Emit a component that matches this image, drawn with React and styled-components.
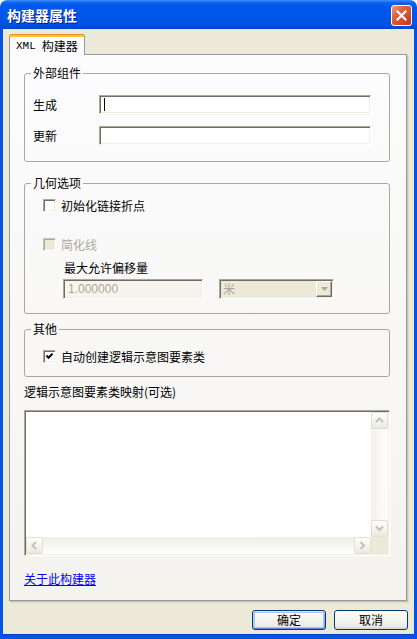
import React from 'react';
import styled, { createGlobalStyle } from 'styled-components';

const CJK = `"Noto Sans CJK SC", "Noto Sans", "Liberation Sans", sans-serif`;

const GlobalStyle = createGlobalStyle`
  html, body { margin: 0; padding: 0; background: #ffffff; }
  body { font-family: ${CJK}; font-size: 12px; }
  #root { width: 417px; height: 639px; overflow: hidden; }
  *, *::before, *::after { box-sizing: border-box; }
`;

const Window = styled.div`
  width: 417px;
  height: 639px;
  display: flex;
  flex-direction: column;
  font-family: ${CJK};
  font-size: 12px;
  color: #000;
`;

const TitleBar = styled.div`
  height: 29px;
  flex: none;
  display: flex;
  align-items: center;
  justify-content: space-between;
  padding: 0 5px 0 7px;
  border-radius: 7px 7px 0 0;
  background: linear-gradient(
    to bottom,
    #3d8ff8 0%,
    #0b61ec 10%,
    #0058ee 20%,
    #0055e9 55%,
    #0052e2 85%,
    #0045cc 100%
  );
`;

const Title = styled.span`
  color: #fff;
  font-weight: bold;
  font-size: 14px;
  line-height: 16px;
  text-shadow: 1px 1px 0 #0a1883;
  margin-top: 1px;
`;

const CloseButton = styled.div`
  width: 21px;
  height: 21px;
  margin-top: 2px;
  border: 1px solid #fff;
  border-radius: 3px;
  background: linear-gradient(135deg, #eb9a7e 0%, #e0603d 35%, #d24b27 70%, #b8361a 100%);
  display: flex;
  align-items: center;
  justify-content: center;
`;

const Client = styled.div`
  flex: 1;
  display: flex;
  flex-direction: column;
  background: #ece9d8;
  border-style: solid;
  border-color: #0055e5;
  border-width: 0 3px 4px 3px;
  padding: 5px 6px 5px 6px;
  box-shadow: inset 0 -1px 0 #0042c4;
`;

const TabStrip = styled.div`
  height: 20px;
  display: flex;
  align-items: flex-start;
  position: relative;
  z-index: 1;
`;

const Tab = styled.div`
  width: 76px;
  height: 21px;
  border: 1px solid #919b9c;
  border-top-color: #e68b2c;
  border-bottom: none;
  border-radius: 3px 3px 0 0;
  background: linear-gradient(to bottom, #ffc73c 0, #ffc73c 2px, #fcfcfe 2px, #fcfcfe 100%);
  padding: 2px 0 0 6px;
  display: flex;
  align-items: center;
  line-height: 14px;
  font-size: 12px;
  white-space: nowrap;
`;

const Mono = styled.span`
  font-family: "Liberation Mono", "DejaVu Sans Mono", monospace;
  font-size: 11px;
  margin-right: 6px;
`;

const Panel = styled.div`
  height: 547px;
  margin-right: 1px;
  border: 1px solid #919b9c;
  box-shadow: 1px 1px 0 #c8c5b5, 2px 2px 0 #dedbcb;
  background: linear-gradient(to bottom, #fcfcfe 0%, #f4f3ee 100%);
  display: flex;
  flex-direction: column;
  padding: 11px 16px 14px 14px;
`;

const Group = styled.fieldset`
  margin: ${(p) => p.$mt || 0}px 0 0 0;
  padding: 0;
  min-width: 0;
  border: 1px solid #a9a89a;
  border-radius: 3px;
`;

const Legend = styled.legend`
  margin-left: 6px;
  padding: 0 2px;
  line-height: 14px;
  font-size: 12px;
`;

const FieldGrid = styled.div`
  display: grid;
  grid-template-columns: 66px 272px;
  row-gap: 12px;
  align-items: center;
  padding: 15px 18px 16px 8px;
`;

const Label = styled.span`
  line-height: 14px;
  color: ${(p) => (p.$disabled ? '#aca899' : '#000')};
`;

const sunken = `
  border: 1px solid;
  border-color: #aca899 #ffffff #ffffff #aca899;
  box-shadow: inset 1px 1px 0 #716f64, inset -1px -1px 0 #f1efe2;
`;

const TextBox = styled.div`
  height: ${(p) => p.$h || 19}px;
  width: ${(p) => (p.$w ? `${p.$w}px` : 'auto')};
  ${sunken}
  background: ${(p) => (p.$disabled ? '#f5f4ef' : '#ffffff')};
  display: flex;
  align-items: center;
  padding-left: 4px;
  color: #aca899;
  font-family: "Liberation Sans", sans-serif;
  font-size: 12px;
`;

const Caret = styled.span`
  width: 1px;
  height: 13px;
  background: #000;
`;

const GroupBody = styled.div`
  display: flex;
  flex-direction: column;
  align-items: flex-start;
  padding: ${(p) => p.$pad};
`;

const CheckRow = styled.div`
  height: 13px;
  display: flex;
  align-items: center;
  gap: 5px;
  margin-top: ${(p) => p.$mt || 0}px;
  line-height: 13px;
  color: ${(p) => (p.$disabled ? '#aca899' : '#000')};
`;

const Box = styled.span`
  width: 13px;
  height: 13px;
  flex: none;
  border: 1px solid;
  border-color: ${(p) => (p.$disabled ? '#c8c5b5 #ffffff #ffffff #c8c5b5' : '#aca899 #ffffff #ffffff #aca899')};
  box-shadow: ${(p) =>
    p.$disabled
      ? 'inset 1px 1px 0 #aca899, inset -1px -1px 0 #f1efe2'
      : 'inset 1px 1px 0 #716f64, inset -1px -1px 0 #f1efe2'};
  background: ${(p) => (p.$disabled ? '#ece9d8' : '#ffffff')};
  display: flex;
  align-items: center;
  justify-content: center;
`;

const OffsetLabel = styled(Label)`
  margin: 10px 0 0 21px;
`;

const OffsetRow = styled.div`
  display: flex;
  gap: 16px;
  margin: 4px 0 0 20px;
`;

const Combo = styled.div`
  width: 115px;
  height: 20px;
  ${sunken}
  background: #ece9d8;
  display: flex;
  align-items: center;
  padding: 0 1px 0 3px;
  color: #aca899;
`;

const ComboText = styled.span`
  flex: 1;
  line-height: 14px;
`;

const ComboButton = styled.span`
  width: 16px;
  height: 16px;
  border: 1px solid;
  border-color: #ffffff #716f64 #716f64 #ffffff;
  box-shadow: inset -1px -1px 0 #aca899;
  background: #ece9d8;
  display: flex;
  align-items: center;
  justify-content: center;
`;

const MapLabel = styled(Label)`
  margin-top: 8px;
`;

const ListBox = styled.div`
  margin-top: 11px;
  height: 146px;
  ${sunken}
  background: #fff;
  display: grid;
  grid-template-columns: 1fr 17px;
  grid-template-rows: 1fr 17px;
  padding: 1px;
`;

const ListArea = styled.div`
  background: #fff;
`;

const VScroll = styled.div`
  display: flex;
  flex-direction: column;
  justify-content: space-between;
  background: linear-gradient(to right, #f3f1ec 0%, #fefefb 100%);
`;

const HScroll = styled.div`
  display: flex;
  justify-content: space-between;
  background: linear-gradient(to bottom, #efeee7 0%, #fefefb 100%);
`;

const Corner = styled.div`
  background: #ece9d8;
`;

const ScrollBtn = styled.div`
  width: 17px;
  height: 17px;
  border: 1px solid #e2e0d4;
  border-radius: 2px;
  background: linear-gradient(to bottom, #fdfdfb 0%, #f1f0ea 70%, #e9e8e0 100%);
  display: flex;
  align-items: center;
  justify-content: center;
`;

const Link = styled.a`
  margin-top: 16px;
  align-self: flex-start;
  line-height: 14px;
  color: #0000ff;
  text-decoration: underline;
  cursor: pointer;
`;

const ButtonRow = styled.div`
  margin-top: 9px;
  height: 20px;
  display: flex;
  justify-content: flex-end;
  gap: 8px;
`;

const Button = styled.button`
  width: 74px;
  height: 20px;
  padding: 0;
  border: 1px solid #003c74;
  border-radius: 3px;
  background: linear-gradient(to bottom, #ffffff 0%, #f6f5f0 40%, #ecebe5 85%, #d6d0c5 100%);
  font-family: ${CJK};
  font-size: 12px;
  line-height: 16px;
  color: #000;
  box-shadow: ${(p) =>
    p.$default
      ? 'inset 0 1px 0 #cee7ff, inset 0 -1px 0 #6982ee, inset 1px 0 0 #b8d2f4, inset -1px 0 0 #8aa8ec, inset 0 0 0 2px #a9c4f2'
      : 'none'};
`;

const Chevron = ({ dir }) => {
  const pts = {
    up: '1,5 4.5,1.5 8,5',
    down: '1,1.5 4.5,5 8,1.5',
    left: '5,1 1.5,4.5 5,8',
    right: '1.5,1 5,4.5 1.5,8',
  }[dir];
  const vertical = dir === 'up' || dir === 'down';
  return (
    <svg width={vertical ? 9 : 7} height={vertical ? 7 : 9} viewBox={vertical ? '0 0 9 7' : '0 0 7 9'}>
      <polyline points={pts} fill="none" stroke="#c5c2b2" strokeWidth="2" />
    </svg>
  );
};

const Check = () => (
  <svg width="9" height="9" viewBox="0 0 9 9">
    <polyline points="1.5,3.5 3.5,5.8 7.6,1.6" fill="none" stroke="#000" strokeWidth="2" />
  </svg>
);

export default function App() {
  return (
    <>
      <GlobalStyle />
      <Window>
        <TitleBar>
          <Title>构建器属性</Title>
          <CloseButton>
            <svg width="11" height="11" viewBox="0 0 11 11">
              <path d="M1.5 1.5 L9.5 9.5 M9.5 1.5 L1.5 9.5" stroke="#fff" strokeWidth="2.2" strokeLinecap="square" />
            </svg>
          </CloseButton>
        </TitleBar>
        <Client>
          <TabStrip>
            <Tab>
              <Mono>XML</Mono>构建器
            </Tab>
          </TabStrip>
          <Panel>
            <Group>
              <Legend>外部组件</Legend>
              <FieldGrid>
                <Label>生成</Label>
                <TextBox>
                  <Caret />
                </TextBox>
                <Label>更新</Label>
                <TextBox />
              </FieldGrid>
            </Group>

            <Group $mt={14}>
              <Legend>几何选项</Legend>
              <GroupBody $pad="9px 0 14px 18px">
                <CheckRow>
                  <Box />
                  <span>初始化链接折点</span>
                </CheckRow>
                <CheckRow $mt={26} $disabled>
                  <Box $disabled />
                  <span>简化线</span>
                </CheckRow>
                <OffsetLabel>最大允许偏移量</OffsetLabel>
                <OffsetRow>
                  <TextBox $w={140} $h={20} $disabled>
                    1.000000
                  </TextBox>
                  <Combo>
                    <ComboText>米</ComboText>
                    <ComboButton>
                      <svg width="7" height="4" viewBox="0 0 7 4">
                        <polygon points="0,0 7,0 3.5,4" fill="#aca899" />
                      </svg>
                    </ComboButton>
                  </Combo>
                </OffsetRow>
              </GroupBody>
            </Group>

            <Group $mt={8}>
              <Legend>其他</Legend>
              <GroupBody $pad="14px 0 13px 18px">
                <CheckRow>
                  <Box>
                    <Check />
                  </Box>
                  <span>自动创建逻辑示意图要素类</span>
                </CheckRow>
              </GroupBody>
            </Group>

            <MapLabel>逻辑示意图要素类映射(可选)</MapLabel>
            <ListBox>
              <ListArea />
              <VScroll>
                <ScrollBtn>
                  <Chevron dir="up" />
                </ScrollBtn>
                <ScrollBtn>
                  <Chevron dir="down" />
                </ScrollBtn>
              </VScroll>
              <HScroll>
                <ScrollBtn>
                  <Chevron dir="left" />
                </ScrollBtn>
                <ScrollBtn>
                  <Chevron dir="right" />
                </ScrollBtn>
              </HScroll>
              <Corner />
            </ListBox>

            <Link>关于此构建器</Link>
          </Panel>
          <ButtonRow>
            <Button $default>确定</Button>
            <Button>取消</Button>
          </ButtonRow>
        </Client>
      </Window>
    </>
  );
}
